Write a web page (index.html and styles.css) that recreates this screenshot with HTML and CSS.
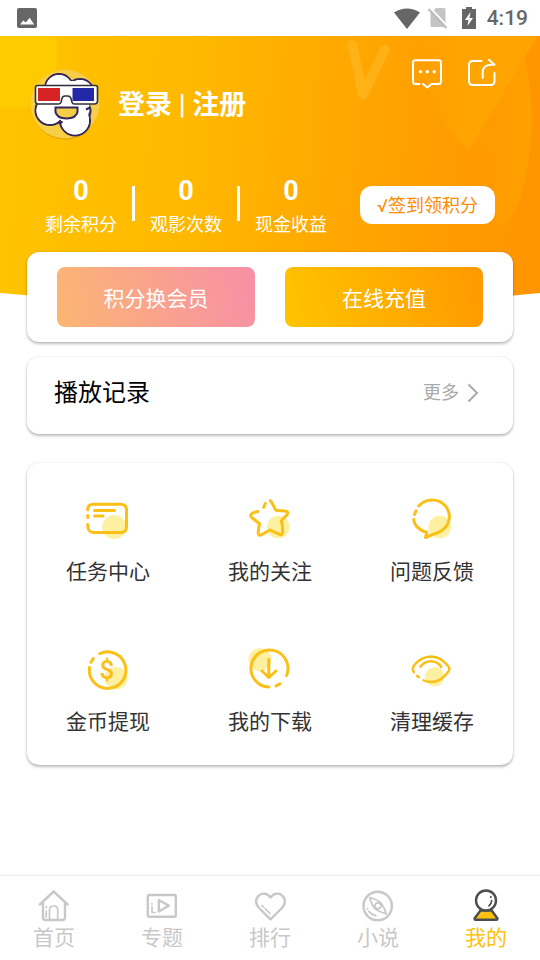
FILE: index.html
```html
<!DOCTYPE html>
<html lang="zh-CN">
<head>
<meta charset="utf-8">
<meta name="viewport" content="width=device-width, initial-scale=1">
<title>我的</title>
<link rel="stylesheet" href="styles.css">
</head>
<body>
<div class="status">
  <svg class="status-photo" width="20" height="20" viewBox="0 0 20 20" aria-hidden="true">
    <rect width="20" height="20" rx="2" fill="#666"/>
    <path d="M3 16.500l3.300-4 2.500 2 3.800-4.800 4.600 6.800z" fill="#fff"/>
  </svg>
  <svg width="26" height="21" viewBox="0 0 26 21" aria-hidden="true">
    <path d="M0 4.500Q13-3.500 26 4.500L13 21z" fill="#666"/>
  </svg>
  <svg class="status-sim" width="20" height="22" viewBox="0 0 20 22" aria-hidden="true">
    <path d="M8 1h8q1.500 0 1.500 1.500V20H4q-1.500 0-1.500-1.500V6.500z" fill="#c4c4c4"/>
    <path d="M1-.5L20 20" stroke="#fff" stroke-width="2"/>
    <path d="M.5 2L18.500 21" stroke="#bbb" stroke-width="2"/>
  </svg>
  <svg class="status-battery" width="14" height="22" viewBox="0 0 14 22" aria-hidden="true">
    <path d="M4 0h6v2h4v20H0V2h4z" fill="#666"/>
    <path d="M8.500 5L3 13h3.500l-1 6L11 11H7.500z" fill="#fff"/>
  </svg>
  <span>4:19</span>
</div>

<header class="hero">
  <svg class="hero-bg" viewBox="0 0 540 270" preserveAspectRatio="none" aria-hidden="true">
    <defs>
      <linearGradient id="sun" x1="0" y1="0" x2="1" y2="0.040">
        <stop offset="0" stop-color="#ffc400"/>
        <stop offset=".35" stop-color="#ffb900"/>
        <stop offset=".8" stop-color="#ff9f00"/>
        <stop offset="1" stop-color="#ff9500"/>
      </linearGradient>
      <linearGradient id="beam" x1="0" y1="0" x2="1" y2="0">
        <stop offset="0" stop-color="#ffb000" stop-opacity="0"/>
        <stop offset=".5" stop-color="#ffb000" stop-opacity=".5"/>
        <stop offset="1" stop-color="#ffb000" stop-opacity=".5"/>
      </linearGradient>
      <linearGradient id="petal" x1="0" y1="0" x2="1" y2="0">
        <stop offset="0" stop-color="#ffa600" stop-opacity="0"/>
        <stop offset="1" stop-color="#ffa600" stop-opacity=".7"/>
      </linearGradient>
    </defs>
    <path d="M0 0h540v257Q270 283 0 257z" fill="url(#sun)"/>
    <path d="M0 0H56Q60 22 54 44Q42 74 14 73Q6 73 0 71z" fill="#ffca00"/>
    <path d="M352.500 9.500L363 58.500 385 13.500" fill="none" stroke="#ffb51c" stroke-opacity=".75" stroke-width="10" stroke-linecap="round" stroke-linejoin="round"/>
    <path d="M415 0C424 60 448 98 469 114L538 0z" fill="url(#beam)"/>
    <path d="M469 114L525 22Q540 92 521 160Q510 190 500 190Q478 180 469 114z" fill="url(#petal)"/>
  </svg>

  <div class="hero-top">
    <a class="profile" href="#login">
      <svg width="70" height="72" viewBox="0 0 70 72" aria-hidden="true">
        <circle cx="35" cy="36.500" r="34" fill="#c88700" fill-opacity=".5"/>
        <circle cx="35" cy="35" r="34.500" fill="#f7ce47"/>
        <g fill="#fff" stroke="#35275e" stroke-width="2">
          <circle cx="29" cy="19" r="14"/><circle cx="50" cy="24" r="14"/>
          <circle cx="20" cy="41.500" r="14.500"/><circle cx="49" cy="42" r="11.500"/>
          <circle cx="45" cy="51.500" r="15"/>
        </g>
        <path d="M20 12h32l8 14-1 16-2 12-13 8-12-11-12-1-10-9 2-20z" fill="#fff"/>
        <circle cx="29" cy="19" r="13" fill="#fff"/><circle cx="50" cy="24" r="13" fill="#fff"/>
        <circle cx="20" cy="41.500" r="13.500" fill="#fff"/><circle cx="45" cy="51.500" r="14" fill="#fff"/>
        <path d="M28.500 54.500Q31 54 32.500 52.500M56 40.500l4-2" fill="none" stroke="#35275e" stroke-width="2"/>
        <path d="M25.500 38.500H47.500V43Q46 49.500 36.500 49.500Q27 49.500 25.500 43z" fill="#f5ce48" stroke="#35275e" stroke-width="2"/>
        <path d="M7.500 16.500H65.500Q67.500 16.500 67.500 18.500V32Q67.500 35 64.500 35H44.500Q42 35 41.500 31.500Q41 27 37.500 27H35Q32 27 31.500 31.500Q31 35 28 35H8Q5.500 35 5.500 32V18.500Q5.500 16.500 7.500 16.500z" fill="#fff" stroke="#2f2f3a" stroke-width="1.600"/>
        <path d="M8 19h22v13H8z" fill="#d62424"/>
        <path d="M42.500 19h21.500v13H42.500z" fill="#2228a8"/>
      </svg>
      <span>登录 | 注册</span>
    </a>
    <nav class="hero-actions" aria-label="快捷操作">
      <a href="#message" aria-label="消息">
        <svg width="32" height="32" viewBox="0 0 32 32" fill="none" stroke="#fff" stroke-width="2" stroke-linecap="round" stroke-linejoin="round">
          <path d="M8.500 26H4.500Q2 26 2 23.500V4.500Q2 2.300 4.500 2.300H27.500Q30 2.300 30 4.500V23.500Q30 26 27.500 26H20.500L16.300 29.500 12 26"/>
          <g fill="#fff" stroke="none"><circle cx="9.500" cy="13.700" r="1.700"/><circle cx="16.300" cy="13.700" r="1.700"/><circle cx="23.200" cy="13.700" r="1.700"/></g>
        </svg>
      </a>
      <a href="#share" aria-label="分享">
        <svg width="32" height="32" viewBox="0 0 32 32" fill="none" stroke="#fff" stroke-width="2" stroke-linecap="round" stroke-linejoin="round">
          <path d="M15.500 3H7Q3 3 3 7V23Q3 27 7 27H24.500Q28.500 27 28.500 23V15"/>
          <path d="M23 1.800L28.500 6.800H25Q16.700 7.500 16.700 14V20"/>
        </svg>
      </a>
    </nav>
  </div>

  <div class="stats">
    <dl class="stat-list">
      <div class="stat"><dt>剩余积分</dt><dd>0</dd></div>
      <div class="stat"><dt>观影次数</dt><dd>0</dd></div>
      <div class="stat"><dt>现金收益</dt><dd>0</dd></div>
    </dl>
    <button class="checkin" type="button">√签到领积分</button>
  </div>
</header>

<main>
  <section class="card wallet">
    <button class="pill pill-vip" type="button">积分换会员</button>
    <button class="pill pill-pay" type="button">在线充值</button>
  </section>

  <section class="card history">
    <h2>播放记录</h2>
    <a href="#history">更多
      <svg width="12" height="20" viewBox="0 0 12 20" fill="none" stroke="#aaa" stroke-width="2" aria-hidden="true"><path d="M1.500 1.500L10 10 1.500 18.500"/></svg>
    </a>
  </section>

  <nav class="card tools" aria-label="功能">
    <a href="#tasks">
      <svg viewBox="0 0 48 48" aria-hidden="true">
        <circle cx="30.300" cy="32" r="12"/>
        <path d="M3.800 15Q3.500 9.200 9.500 9.200H36.500Q42.500 9.200 42.500 15V31.500Q42.500 37.500 36.500 37.500H9.500Q3.500 37.500 3.800 29.500M3.800 20.500V22.500M10.500 15.600H30.500M10.500 21H19"/>
      </svg>
      任务中心
    </a>
    <a href="#follow">
      <svg viewBox="0 0 48 48" aria-hidden="true">
        <circle cx="32.300" cy="32" r="11.300"/>
        <path d="M24.300 5.700C26.500 7.500 27.500 12 30 15.300C33 16 38 15.300 41 16.500Q42.700 18 41 19.800L35.300 25.700Q36.800 31 36.700 37Q36.500 40.800 33 39.200L24 35 15.500 39.700Q12 41.500 12.200 37.500Q12.300 32 13.700 29L5.800 22.500Q3.500 20.300 6 18.300Q9 17 11.800 16.500M17.800 12.300L19.300 8.500"/>
      </svg>
      我的关注
    </a>
    <a href="#feedback">
      <svg viewBox="0 0 48 48" aria-hidden="true">
        <circle cx="31.700" cy="32" r="11.300"/>
        <path d="M10.800 11A17.300 16.700 0 1 1 33 36Q29 38.500 24.500 39.500L17.500 42.500 18.800 37.500Q6.500 33.500 5.700 24.500M6.500 19.300L8 15.800"/>
      </svg>
      问题反馈
    </a>
    <a href="#withdraw">
      <svg viewBox="0 0 48 48" aria-hidden="true">
        <circle cx="32" cy="33.300" r="11.300"/>
        <path d="M15.700 8.600A18.300 18.300 0 1 1 5.500 22.500M7 17.300L9.300 13.500"/>
        <text x="23" y="34">$</text>
      </svg>
      金币提现
    </a>
    <a href="#download">
      <svg viewBox="0 0 48 48" aria-hidden="true">
        <circle cx="14" cy="14.700" r="11.500"/>
        <path d="M23 42A18.500 18.500 0 1 1 40.600 30.500M30 41L34 38.700M22.800 14.500V32.500M16 26L22.800 32.500 30 26"/>
      </svg>
      我的下载
    </a>
    <a href="#clean">
      <svg viewBox="0 0 48 48" aria-hidden="true">
        <circle cx="26.700" cy="31.700" r="9.700"/>
        <path class="fine" d="M6 27.300Q3.500 24.500 6 20.500Q13 11.700 23 11.500Q33 11.700 40.500 21.500Q42.300 24 40.500 26.500Q33 37 23 37Q19 37 15.500 35.200M9 30.700L11 32.300M12.300 21.800Q16.500 16.200 22.800 16.200Q29.500 16.200 33.300 22"/>
      </svg>
      清理缓存
    </a>
  </nav>
</main>

<nav class="tabs" aria-label="主导航">
  <a href="#home">
    <svg viewBox="0 0 36 36" aria-hidden="true">
      <path d="M3.800 16.500L17.700 3.500 31.600 16.500M7 14.500V29.500Q7 32 9.500 32H26.500Q29 32 29 29.500V14.500"/>
      <path class="thin" d="M13.500 31.500V21.500Q13.500 18 17.600 18Q21.700 18 21.700 21.500V31.500M10.300 23V29M10.300 18.500V19.500"/>
    </svg>
    首页
  </a>
  <a href="#topics">
    <svg viewBox="0 0 36 36" aria-hidden="true">
      <rect x="3.800" y="7" width="28" height="21.700" rx="1.500"/>
      <path d="M14.800 12V23.500L24.800 17.700z"/>
      <path class="thin" d="M8 19V24.500H11M8 15.500V16"/>
    </svg>
    专题
  </a>
  <a href="#rank">
    <svg viewBox="0 0 36 36" aria-hidden="true">
      <path d="M18.500 31.300L7 20Q2 14.500 5.500 9Q8.500 5 13 5.800Q16 6.300 18.500 9.500Q21 6.300 24 5.800Q28.500 5 31.500 9Q35 14.500 30 20z"/>
      <path class="thin" d="M10 17.500L11.500 19M13 20.500L18 25.500"/>
    </svg>
    排行
  </a>
  <a href="#novel">
    <svg viewBox="0 0 36 36" aria-hidden="true">
      <circle cx="17.700" cy="18" r="14.200"/>
      <path class="thin" d="M9.800 9.500Q17 11.500 21 15Q24.500 19.500 26.300 26Q19 23.800 14.700 20.500Q11.500 16.500 9.800 9.500z"/>
      <circle class="thin" cx="18" cy="17.800" r="3"/>
      <path class="thin" d="M7.500 20.500V21M8.800 23.300Q11.500 27 15.800 27.600"/>
    </svg>
    小说
  </a>
  <a class="active" href="#mine" aria-current="page">
    <svg viewBox="0 0 36 36" aria-hidden="true">
      <path d="M12.500 22.500H23.700L29.500 30.500Q29.500 31.800 28.500 31.800H7.500Q6.500 31.800 6.500 30.500z" fill="#fdc20f"/>
      <circle cx="18" cy="12.500" r="10" fill="#fff"/>
      <path class="thin" d="M23.700 12.500Q23.500 16 21 17.800M22.800 8.700V9.200"/>
    </svg>
    我的
  </a>
</nav>
</body>
</html>
```
FILE: styles.css
```css
* {
  box-sizing: border-box;
}

body {
  margin: 0;
  min-height: 100vh;
  display: flex;
  flex-direction: column;
  background: #fff;
  color: #333;
  font-family: Roboto, "Noto Sans CJK SC", sans-serif;
  font-size: 21px;
}

a {
  color: inherit;
  text-decoration: none;
}

button {
  border: 0;
  padding: 0;
  font: inherit;
  cursor: pointer;
}

svg {
  display: block;
  flex: none;
}

/* Status bar */
.status {
  display: flex;
  align-items: center;
  height: 36px;
  padding: 0 12px 0 17px;
  color: #666;
  font-weight: 500;
}

.status-photo {
  margin-right: auto;
}

.status-sim {
  margin-left: 8px;
}

.status-battery {
  margin: 0 11px 0 14px;
}

/* Header */
.hero {
  position: relative;
  padding-bottom: 15px;
  color: #fff;
}

.hero-bg {
  position: absolute;
  inset: 0;
  z-index: -1;
  width: 100%;
  height: 270px;
}

.hero-top {
  display: flex;
  justify-content: space-between;
  align-items: flex-start;
  padding: 22px 42px 0 30px;
}

.profile {
  display: flex;
  align-items: flex-start;
  gap: 18px;
  margin-top: 11px;
  font-size: 27px;
  font-weight: 700;
  line-height: 72px;
}

.hero-actions {
  display: flex;
  gap: 23px;
}

.stats {
  display: flex;
  justify-content: space-between;
  align-items: flex-start;
  margin-top: 33px;
  padding: 0 45px 0 30px;
}

.stat-list {
  display: flex;
  margin: 0;
}

.stat {
  position: relative;
  display: flex;
  flex-direction: column-reverse;
  gap: 5px;
  width: 105px;
  padding-right: 3px;
  text-align: center;
}

.stat:not(:last-child)::after {
  content: "";
  position: absolute;
  top: 12px;
  right: 0;
  width: 3px;
  height: 35px;
  background: #fff;
}

.stat dt {
  font-size: 18px;
  line-height: 24px;
}

.stat dd {
  margin: 0;
  font-size: 27px;
  font-weight: 700;
  line-height: 34px;
}

.checkin {
  height: 38px;
  margin-top: 12px;
  padding: 0 17px 2px;
  border-radius: 12px;
  background: #fff;
  color: #ff8c00;
  font-size: 18px;
}

/* Cards */
main {
  flex: 1;
  padding: 0 27px 24px;
}

.card {
  border-radius: 12px;
  background: #fff;
  box-shadow: 0 2px 3px rgba(0, 0, 0, 0.25), 0 0 2px rgba(0, 0, 0, 0.12);
}

.wallet {
  display: flex;
  gap: 30px;
  padding: 15px 30px;
}

.pill {
  flex: 1;
  height: 60px;
  padding-bottom: 1px;
  border-radius: 8px;
  color: #fff;
}

.pill-vip {
  background: linear-gradient(75deg, #fcb672, #f78fa7);
}

.pill-pay {
  background: linear-gradient(75deg, #ffc400, #ff9900);
}

.history {
  display: flex;
  justify-content: space-between;
  margin-top: 15px;
  padding: 21px 34px 26px 27px;
  line-height: 30px;
}

.history h2 {
  margin: 0;
  color: #000;
  font-size: 24px;
  font-weight: 400;
}

.history a {
  display: flex;
  align-items: center;
  gap: 8px;
  color: #aaa;
  font-size: 18px;
}

.tools {
  display: grid;
  grid-template-columns: repeat(3, 1fr);
  row-gap: 58px;
  margin-top: 29px;
  padding: 32px 0 28px;
}

.tools a {
  display: flex;
  flex-direction: column;
  align-items: center;
  gap: 14px;
  line-height: 30px;
}

.tools svg {
  width: 48px;
  height: 48px;
}

.tools circle {
  fill: #fdf0a0;
}

.tools path {
  fill: none;
  stroke: #fbbf16;
  stroke-width: 3;
  stroke-linecap: round;
  stroke-linejoin: round;
}

.tools .fine {
  stroke-width: 2.4;
}

.tools text {
  fill: #fbbf16;
  font-size: 26px;
  font-weight: 500;
  text-anchor: middle;
}

/* Bottom navigation */
.tabs {
  display: flex;
  padding: 12px 0 9px;
  border-top: 1px solid #eee;
  box-shadow: 0 -1px 1px #f7f7f7;
  color: #c8c8c8;
}

.tabs a {
  flex: 1;
  display: flex;
  flex-direction: column;
  align-items: center;
  gap: 1px;
  line-height: 26px;
}

.tabs svg {
  width: 36px;
  height: 36px;
  fill: none;
  stroke: #c8c8c8;
  stroke-width: 2.4;
  stroke-linecap: round;
  stroke-linejoin: round;
}

.tabs .thin {
  stroke-width: 1.7;
}

.tabs .active {
  color: #fdc20f;
}

.tabs .active svg {
  stroke: #4d4d4d;
}
```
